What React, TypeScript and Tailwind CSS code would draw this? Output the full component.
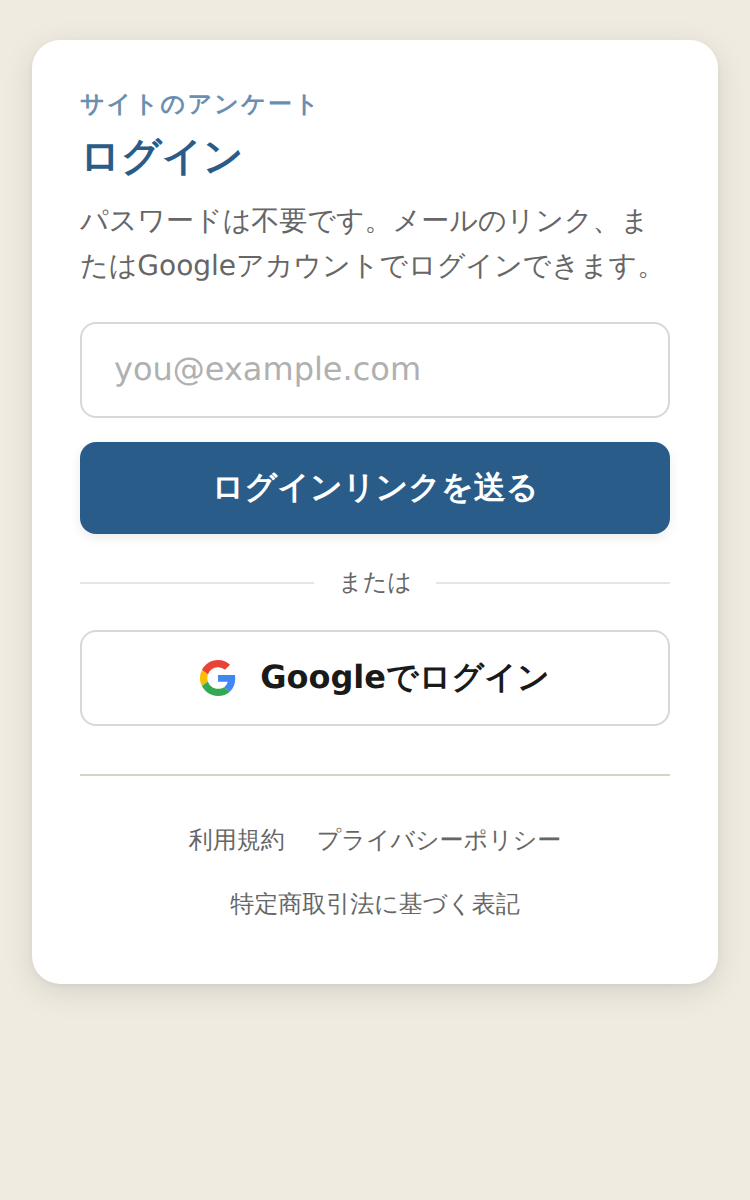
export default function App() {
  return (
    <div lang="ja" className="min-h-[1200px] bg-[#efebe1] px-8 py-10 font-['DejaVu_Sans',sans-serif] [text-rendering:geometricPrecision]">
      <div className="rounded-[28px] bg-white p-12 shadow-[0_8px_32px_rgba(0,0,0,0.10),0_2px_6px_rgba(0,0,0,0.05)]">
        <p className="text-[24px] leading-[32px] font-semibold tracking-[2.3px] text-[#6b8fb0]">サイトのアンケート</p>
        <h1 className="mt-[13px] text-[40px] leading-[48px] font-bold text-[#2a5c8a]">ログイン</h1>
        <p className="mt-[18px] text-[28px] leading-[44.8px] text-[#666666]">パスワードは不要です。メールのリンク、またはGoogleアカウントでログインできます。</p>
        <input
          placeholder="you@example.com"
          className="mt-[33.4px] block h-24 w-full rounded-2xl border-2 border-[#d8d8d8] px-8 pb-0.5 text-[32px] outline-none [text-rendering:geometricPrecision] placeholder:text-[#b0b0b0]"
        />
        <button className="mt-6 block h-[92px] w-full rounded-2xl bg-[#2a5c8a] pb-0.5 text-[32px] font-bold text-white shadow-[0_4px_12px_rgba(0,0,0,0.08)] [text-rendering:geometricPrecision]">
          ログインリンクを送る
        </button>
        <div className="mt-6 flex items-center gap-6">
          <div className="mt-0.5 h-0.5 flex-1 bg-[#e5e5e5]" />
          <span className="text-[24px] leading-[48px] text-[#666666]">または</span>
          <div className="mt-0.5 h-0.5 flex-1 bg-[#e5e5e5]" />
        </div>
        <button className="mt-6 flex h-24 w-full items-center justify-center gap-6 rounded-2xl border-2 border-[#d8d8d8] bg-white text-[32px] font-bold text-[#1a1a1a] [text-rendering:geometricPrecision]">
          <svg width="36" height="36" viewBox="0 0 48 48">
            <path fill="#EA4335" d="M24 9.5c3.54 0 6.71 1.22 9.21 3.6l6.85-6.85C35.9 2.38 30.47 0 24 0 14.62 0 6.51 5.38 2.56 13.22l7.98 6.19C12.43 13.72 17.74 9.5 24 9.5z" />
            <path fill="#4285F4" d="M46.98 24.55c0-1.57-.15-3.09-.38-4.55H24v9.02h12.94c-.58 2.96-2.26 5.48-4.78 7.18l7.73 6c4.51-4.18 7.09-10.36 7.09-17.65z" />
            <path fill="#FBBC05" d="M10.53 28.59c-.48-1.45-.76-2.99-.76-4.59s.27-3.14.76-4.59l-7.98-6.19C.92 16.46 0 20.12 0 24c0 3.88.92 7.54 2.56 10.78l7.97-6.19z" />
            <path fill="#34A853" d="M24 48c6.48 0 11.93-2.13 15.89-5.81l-7.73-6c-2.15 1.45-4.92 2.3-8.16 2.3-6.26 0-11.57-4.22-13.47-9.91l-7.98 6.19C6.51 42.62 14.62 48 24 48z" />
          </svg>
          <span className="pb-0.5">Googleでログイン</span>
        </button>
        <div className="mt-12 border-t-2 border-[#d6d2c6] pt-8 text-center text-[24px] leading-[64px] text-[#666666]">
          <div className="flex justify-center gap-8">
            <span>利用規約</span>
            <span>プライバシーポリシー</span>
          </div>
          <div>特定商取引法に基づく表記</div>
        </div>
      </div>
    </div>
  );
}
